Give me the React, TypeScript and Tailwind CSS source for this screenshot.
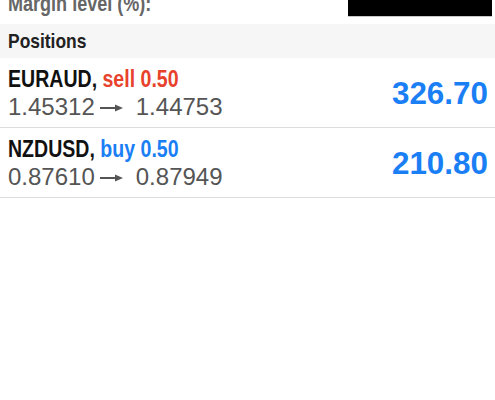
const positions = [
  { symbol: "EURAUD", side: "sell", volume: "0.50", open: "1.45312", current: "1.44753", profit: "326.70" },
  { symbol: "NZDUSD", side: "buy", volume: "0.50", open: "0.87610", current: "0.87949", profit: "210.80" },
];

function Arrow() {
  return (
    <svg width="23" height="10" viewBox="0 0 23 10" className="ml-[5px] mr-[13px] inline-block align-[2px]">
      <line x1="0" y1="5" x2="16" y2="5" stroke="#555" strokeWidth="2" />
      <polygon points="15,1.5 23,5 15,8.5" fill="#555" />
    </svg>
  );
}

export default function App() {
  return (
    <div className="w-[495px] h-[400px] overflow-hidden bg-white font-['Liberation_Sans',Arial,sans-serif]">
      <div className="flex h-6 items-start justify-between overflow-hidden">
        <span className="ml-2 -mt-[8px] inline-block origin-left scale-x-[0.82] whitespace-nowrap text-[22px] leading-6 font-bold text-[#666]">
          Margin level (%):
        </span>
        <div className="mr-[3px] h-[17px] w-[144px] border-b border-[#c8c8c8] bg-black" />
      </div>
      <div className="flex h-[34px] items-center bg-[#f6f6f6] pl-2">
        <span className="inline-block origin-left scale-x-[0.83] text-[21px] font-bold text-[#222]">
          Positions
        </span>
      </div>
      {positions.map((p) => (
        <div
          key={p.symbol}
          className="flex h-[70px] items-center justify-between border-b border-[#dcdcdc] pl-2 pr-[7px]"
        >
          <div className="flex flex-col">
            <div className="origin-left scale-x-[0.85] whitespace-nowrap text-[23px] leading-[28px] font-bold">
              <span className="text-[#111]">{p.symbol}, </span>
              <span className={p.side === "sell" ? "text-[#e8412c]" : "text-[#1a7ef5]"}>
                {p.side} {p.volume}
              </span>
            </div>
            <div className="whitespace-nowrap text-[24px] leading-[28px] text-[#555]">
              {p.open}
              <Arrow />
              {p.current}
            </div>
          </div>
          <span className="inline-block origin-right scale-x-[0.98] text-[32px] font-bold text-[#1a7ef5]">
            {p.profit}
          </span>
        </div>
      ))}
    </div>
  );
}
